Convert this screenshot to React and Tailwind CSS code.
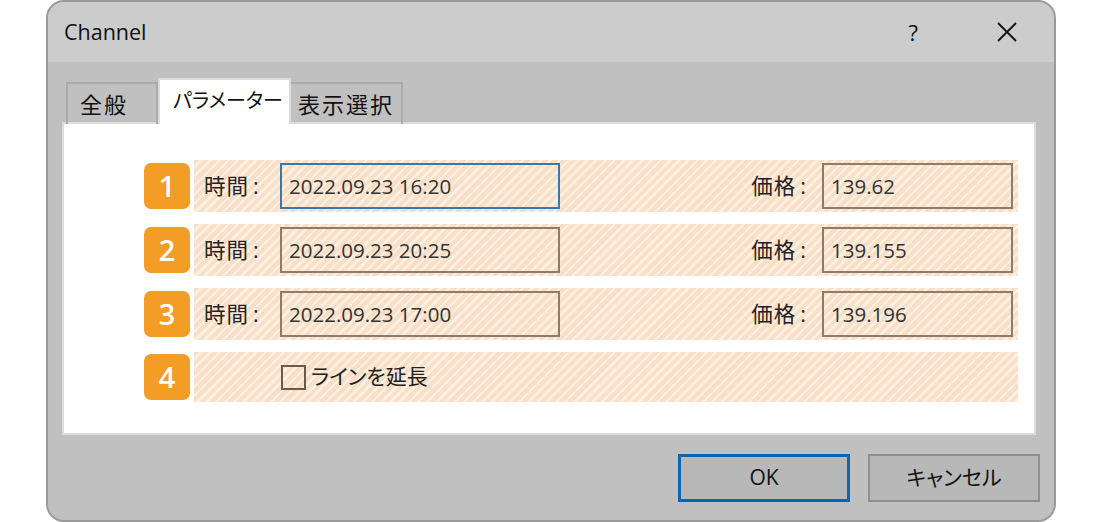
import React from 'react';

const stripe =
  'bg-[repeating-linear-gradient(135deg,#f9dfc6_0px,#f9dfc6_4px,#fdefe1_4px,#fdefe1_6.5px)]';

const jp = "[font-feature-settings:'palt']";

const rows = [
  { n: '1', time: '2022.09.23 16:20', price: '139.62', focus: true },
  { n: '2', time: '2022.09.23 20:25', price: '139.155' },
  { n: '3', time: '2022.09.23 17:00', price: '139.196' },
];

const Badge = ({ n }) => (
  <div className="w-[46px] h-[46px] rounded-[7px] bg-[#f39c26] text-white text-[29px] font-semibold flex items-center justify-center shrink-0">
    {n}
  </div>
);

const Field = ({ value, width, focus }) => (
  <div
    className={`${width} h-[46px] border-2 ${
      focus ? 'border-[#3a78b0]' : 'border-[#8e7b6b]'
    } flex items-center pl-[7px] text-[20.5px] text-[#333]`}
  >
    {value}
  </div>
);

const Label = ({ text, className }) => (
  <span className={`flex items-center text-[21.5px] text-[#222] ${className}`}>
    {text}
    <span className="ml-[4px]">:</span>
  </span>
);

const App = () => {
  return (
    <div
      className="w-[1100px] h-[522px] bg-white overflow-hidden"
      style={{ fontFamily: "'Open Sans', 'Noto Sans CJK JP', sans-serif" }}
    >
      <div className="ml-[46px] w-[1010px] h-[522px] border-2 border-[#9a9a9a] rounded-[18px] overflow-hidden bg-[#c0c0c0] flex flex-col">
        {/* title bar */}
        <div className="h-[60px] bg-[#cccccc] flex items-center pl-[16px] text-[21.5px] text-[#111] shrink-0">
          <span>Channel</span>
          <span className="ml-auto mr-[78px] text-[22px]">?</span>
          <svg width="22" height="22" viewBox="0 0 22 22" className="mr-[36px]">
            <path d="M2 2 L20 20 M20 2 L2 20" stroke="#111" strokeWidth="1.8" />
          </svg>
        </div>

        <div className="pl-[14px] pr-[18px] pt-[16px] flex flex-col">
          {/* tabs */}
          <div className="flex items-end h-[46px] relative z-10 -mb-[2px] text-[#111]">
            <div className="ml-[4px] w-[92px] h-[42px] border-2 border-b-0 border-[#aaaaaa] flex items-center pl-[12px] text-[22px] tracking-[2px]">
              全般
            </div>
            <div className={`w-[133px] h-[46px] bg-white border-2 border-b-0 border-[#dcdcdc] flex items-center pl-[13px] pb-[2px] text-[20px] ${jp}`}>
              パラメーター
            </div>
            <div className="w-[112px] h-[42px] border-2 border-b-0 border-l-0 border-[#aaaaaa] flex items-center pl-[7px] text-[22px] tracking-[2px]">
              表示選択
            </div>
          </div>

          {/* panel */}
          <div className="h-[313px] bg-white border-2 border-[#dcdcdc] pt-[36px] pl-[80px] pr-[16px] flex flex-col gap-[12px]">
            {rows.map((r) => (
              <div key={r.n} className="flex items-center gap-[4px]">
                <Badge n={r.n} />
                <div className={`flex-1 h-[52px] ${stripe} flex items-center pl-[10px] pr-[5px]`}>
                  <Label text="時間" className="w-[76px] tracking-[1px]" />
                  <Field value={r.time} width="w-[280px]" focus={r.focus} />
                  <Label text="価格" className="ml-auto mr-[15px] tracking-[1px]" />
                  <Field value={r.price} width="w-[191px]" />
                </div>
              </div>
            ))}
            <div className="flex items-center gap-[4px]">
              <Badge n="4" />
              <div className={`flex-1 h-[50px] ${stripe} flex items-center pl-[87px]`}>
                <div className="w-[25px] h-[25px] border-2 border-[#6b5a4b]" />
                <span className={`ml-[5px] text-[21px] text-[#222] ${jp}`}>ラインを延長</span>
              </div>
            </div>
          </div>

          {/* buttons */}
          <div className={`flex justify-end gap-[18px] mt-[19px] mr-[-4px] ${jp}`}>
            <button className="w-[172px] h-[48px] border-[3px] border-[#0b63b2] bg-[#b8b8b8] text-[21px] text-[#111]">
              OK
            </button>
            <button className="w-[172px] h-[48px] border-2 border-[#8f8f8f] bg-[#b8b8b8] text-[21px] text-[#111]">
              キャンセル
            </button>
          </div>
        </div>
      </div>
    </div>
  );
};

export default App;
